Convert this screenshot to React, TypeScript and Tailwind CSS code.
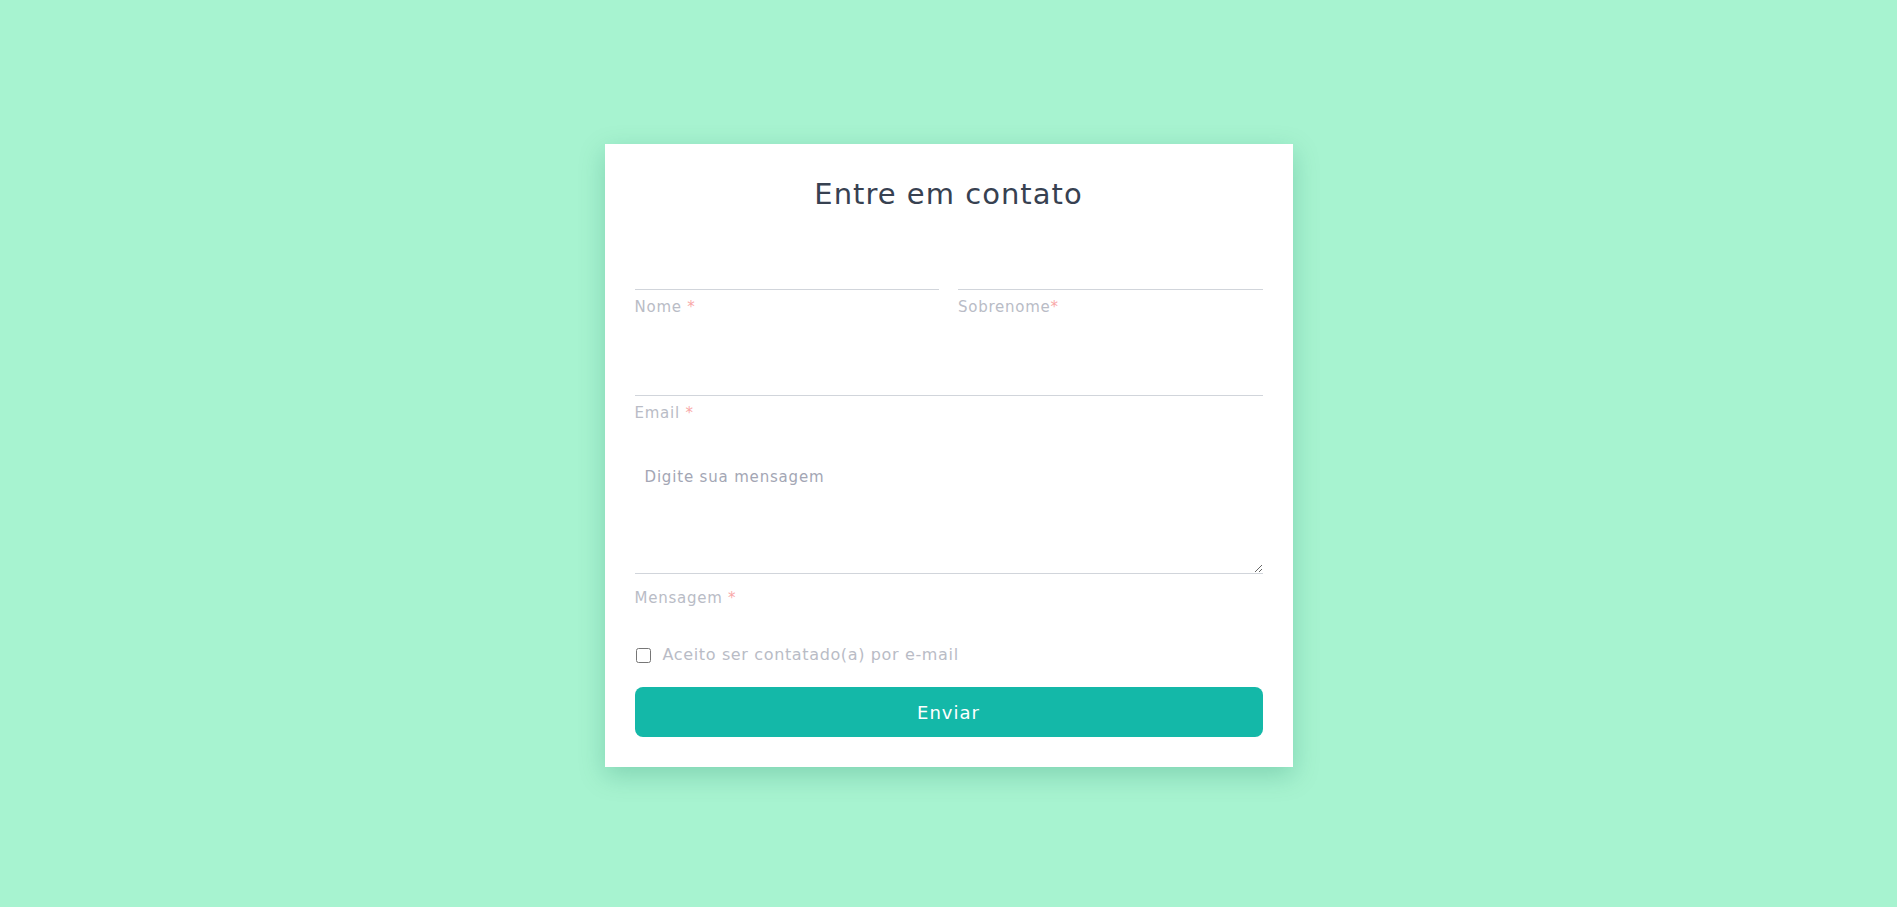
import React from "react";

const font = { fontFamily: "'DejaVu Sans', 'Noto Sans', sans-serif" };

function Label({ text, tight, extra }: { text: string; tight?: boolean; extra?: boolean }) {
  return (
    <div className={`${extra ? "mt-[14px]" : "mt-[7px]"} text-[15px] leading-[20px] tracking-[0.05em] text-[#b9bcc6]`}>
      {text}
      {tight ? "" : " "}
      <span className="text-[#f9a8a8]">*</span>
    </div>
  );
}

export default function App() {
  return (
    <div style={font} className="min-h-[907px] w-full bg-[#a7f3d0] flex justify-center pt-[144px]">
      <div className="w-[688px] h-[623px] bg-white px-[30px] pt-[30px] shadow-[0_8px_24px_rgba(16,120,90,0.25)] flex flex-col">
        <h1 className="text-center text-[29px] leading-[40px] tracking-[0.035em] text-[#374151]">Entre em contato</h1>
        <div className="mt-[36px] flex gap-[19px]">
          <div className="flex-1 flex flex-col">
            <input className="h-[40px] border-b border-[#d1d5db] outline-none" />
            <Label text="Nome" />
          </div>
          <div className="flex-1 flex flex-col">
            <input className="h-[40px] border-b border-[#d1d5db] outline-none" />
            <Label text="Sobrenome" tight />
          </div>
        </div>
        <div className="mt-[39px] flex flex-col">
          <input className="h-[40px] border-b border-[#d1d5db] outline-none" />
          <Label text="Email" />
        </div>
        <div className="mt-[39px] flex flex-col">
          <textarea
            placeholder="Digite sua mensagem"
            className="h-[112px] px-[10px] py-[4px] text-[15px] tracking-[0.055em] border-b border-[#d1d5db] outline-none placeholder:text-[#a3a6b4]"
          />
          <Label text="Mensagem" extra />
        </div>
        <label className="mt-[35px] flex items-center gap-[12px] text-[16px] tracking-[0.04em] text-[#b9bcc6]">
          <input type="checkbox" className="w-[15px] h-[15px] ml-[1px]" />
          Aceito ser contatado(a) por e-mail
        </label>
        <button className="mt-[20px] h-[50px] w-full rounded-[8px] bg-[#14b8a8] text-white text-[18px] tracking-[0.055em]">Enviar</button>
      </div>
    </div>
  );
}
